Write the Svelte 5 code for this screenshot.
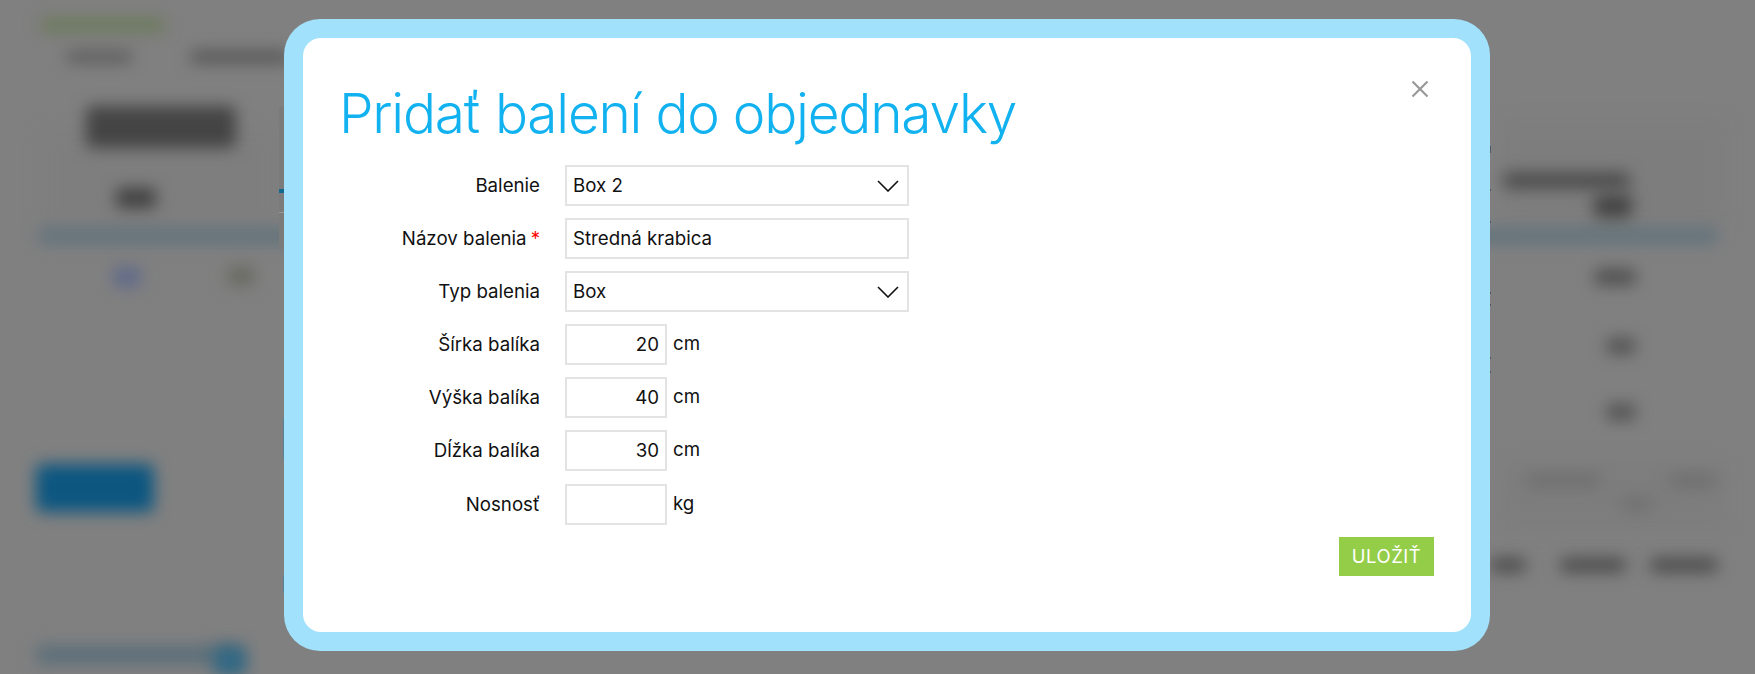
<script>
  const fields = [
    { label: "Balenie", type: "select", value: "Box 2" },
    { label: "Názov balenia", type: "text", value: "Stredná krabica", required: true },
    { label: "Typ balenia", type: "select", value: "Box" },
    { label: "Šírka balíka", type: "number", value: "20", unit: "cm" },
    { label: "Výška balíka", type: "number", value: "40", unit: "cm" },
    { label: "Dĺžka balíka", type: "number", value: "30", unit: "cm" },
    { label: "Nosnosť", type: "number", value: "", unit: "kg" }
  ];

  // blurred page behind the modal: x, y, width, height, colour
  const smudges = [
    [40, 130, 240, 100, "#7e7e7e"],
    [1500, 120, 225, 105, "#7d7d7d"],
    [1500, 460, 225, 70, "#7d7d7d"],
    [40, 18, 125, 14, "#6b7a5a"],
    [66, 52, 66, 10, "#565656"],
    [190, 51, 100, 12, "#545454"],
    [86, 106, 150, 42, "#444"],
    [116, 188, 40, 20, "#404040"],
    [38, 229, 1680, 14, "#5e727c"],
    [113, 267, 28, 20, "#606a8a"],
    [227, 266, 28, 20, "#6a6a62"],
    [36, 464, 118, 48, "#0c5680"],
    [36, 646, 205, 18, "#5a6e79"],
    [214, 646, 32, 30, "#326884"],
    [1503, 173, 127, 15, "#484848"],
    [1594, 194, 38, 24, "#444"],
    [1594, 269, 42, 16, "#4e4e4e"],
    [1606, 338, 30, 16, "#525252"],
    [1606, 404, 30, 16, "#525252"],
    [1526, 476, 74, 9, "#696969"],
    [1670, 476, 46, 9, "#686868"],
    [1622, 499, 30, 10, "#6c6c6c"],
    [1490, 558, 36, 14, "#4a4a4a"],
    [1560, 558, 66, 14, "#4a4a4a"],
    [1650, 558, 68, 14, "#4a4a4a"]
  ];

  // bits of the page that stay sharp right at the modal's left and right edge
  const slivers = [
    [279, 107, 5, 140, "#7b7b7b"],
    [279, 189, 5, 4, "#14688f"],
    [279, 212, 5, 1, "#999"],
    [283, 418, 1, 41, "#5a8296"],
    [283, 575, 1, 18, "#5a8296"],
    [1490, 146, 1, 7, "#4a5a62"],
    [1490, 189, 1, 2, "#4a5a62"],
    [1490, 221, 1, 2, "#4a5a62"],
    [1490, 292, 1, 2, "#4a5a62"],
    [1490, 304, 1, 2, "#4a5a62"],
    [1490, 357, 1, 2, "#4a5a62"],
    [1490, 371, 1, 2, "#4a5a62"]
  ];
</script>

<div class="page" aria-hidden="true">
  {#each smudges as [x, y, w, h, c]}
    <div class="smudge" style="left:{x}px;top:{y}px;width:{w}px;height:{h}px;background:{c}"></div>
  {/each}
  {#each slivers as [x, y, w, h, c]}
    <div class="sliver" style="left:{x}px;top:{y}px;width:{w}px;height:{h}px;background:{c}"></div>
  {/each}
</div>

<div class="modal">
  <div class="modal-inner">
    <button class="close" aria-label="Zavrieť">
      <svg width="18" height="18" viewBox="0 0 18 18">
        <path d="M1.5 1.5l15 15M16.5 1.5l-15 15" stroke="#999" stroke-width="2.2" fill="none" />
      </svg>
    </button>
    <h1>Pridať balení do objednavky</h1>
    <form class="form">
      {#each fields as f}
        <div class="label">
          {f.label}{#if f.required}<span class="req">*</span>{/if}
        </div>
        <div class="control">
          {#if f.type === "select"}
            <div class="input wide select">
              <span>{f.value}</span>
              <svg width="22" height="12" viewBox="0 0 22 12">
                <path d="M1 1l10 10L21 1" stroke="#111" stroke-width="1.6" fill="none" />
              </svg>
            </div>
          {:else if f.type === "text"}
            <div class="input wide">{f.value}</div>
          {:else}
            <div class="input small">{f.value}</div>
            <span class="unit">{f.unit}</span>
          {/if}
        </div>
      {/each}
    </form>
    <div class="actions">
      <button class="save" type="button">ULOŽIŤ</button>
    </div>
  </div>
</div>

<style>
  :global(body) {
    margin: 0;
    background: #808080;
    font-family: Inter, "Noto Sans", sans-serif;
  }

  .page {
    position: relative;
    width: 1755px;
    height: 674px;
    overflow: hidden;
    background: #808080;
  }

  .smudge {
    position: absolute;
    filter: blur(8px);
    border-radius: 6px;
  }

  .sliver {
    position: absolute;
  }

  .modal {
    position: absolute;
    left: 284px;
    top: 19px;
    width: 1206px;
    height: 632px;
    box-sizing: border-box;
    padding: 19px;
    background: #a1e1fb;
    border-radius: 36px;
  }

  .modal-inner {
    position: relative;
    height: 100%;
    box-sizing: border-box;
    padding: 40px 37px 0 36px;
    background: #fff;
    border-radius: 18px;
  }

  .close {
    position: absolute;
    top: 42px;
    right: 42px;
    padding: 0;
    border: 0;
    background: none;
    line-height: 0;
  }

  h1 {
    margin: 0 0 17px;
    font-size: 55px;
    font-weight: 300;
    line-height: 70px;
    letter-spacing: -1.25px;
    color: #12b2f0;
  }

  .form {
    display: grid;
    grid-template-columns: 201px 1fr;
    column-gap: 25px;
    row-gap: 12.1px;
    color: #111;
    font-size: 18.7px;
  }

  .label {
    display: flex;
    align-items: center;
    justify-content: flex-end;
    height: 41px;
  }

  .req {
    margin-left: 4px;
    color: #f00;
  }

  .control {
    display: flex;
    align-items: center;
  }

  .input {
    display: flex;
    align-items: center;
    justify-content: space-between;
    box-sizing: border-box;
    height: 41px;
    padding: 0 6px;
    border: 2px solid #e3e3e3;
    background: #fff;
  }

  .wide {
    width: 344px;
  }

  .select svg {
    margin-right: 2px;
  }

  .small {
    width: 102px;
    justify-content: flex-end;
  }

  .unit {
    margin-left: 6px;
    margin-top: -2px;
  }

  .actions {
    display: flex;
    justify-content: flex-end;
    margin-top: 12px;
  }

  .save {
    width: 95px;
    height: 39px;
    padding: 0;
    border: 0;
    background: #94cd48;
    color: #fff;
    font: 400 18.5px Inter, sans-serif;
    letter-spacing: 0.5px;
  }
</style>
